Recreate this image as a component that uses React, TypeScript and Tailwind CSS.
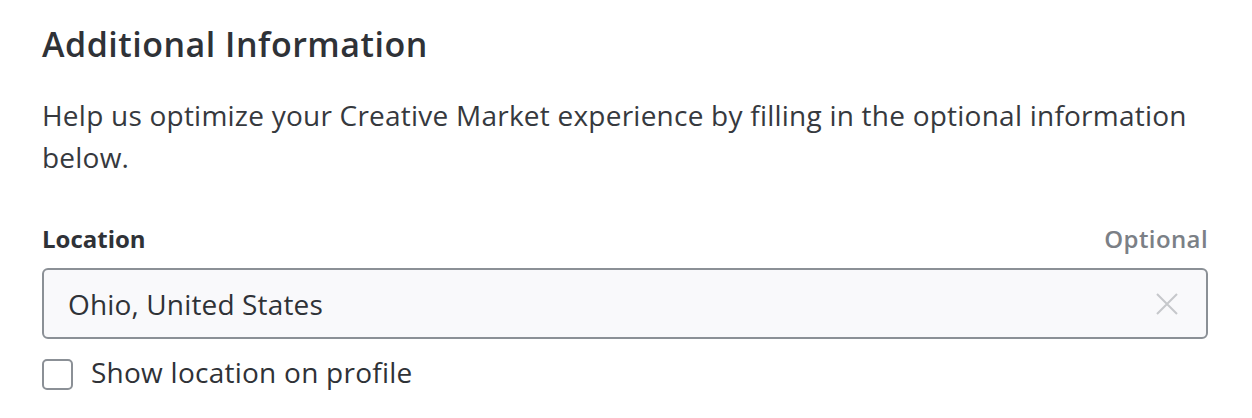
import React from "react";

export default function App() {
  return (
    <div
      className="w-[1252px] h-[418px] bg-white text-[#2f3237] pl-[42px] pr-[44px] pt-[22px]"
      style={{ fontFamily: "'Open Sans', 'Noto Sans', sans-serif" }}
    >
      <h2 className="text-[34px] leading-[44px] font-semibold tracking-[0.5px]">Additional Information</h2>
      <p className="mt-[28px] text-[28px] leading-[42px] tracking-[0.23px] text-[#36393e]">
        Help us optimize your Creative Market experience by filling in the optional information below.
      </p>
      <div className="mt-[46px] flex items-center justify-between">
        <span className="text-[24px] leading-[30px] font-bold">Location</span>
        <span className="text-[24px] leading-[30px] font-semibold tracking-[0.4px] text-[#7b8086]">Optional</span>
      </div>
      <div className="mt-[14px] h-[71px] flex items-center justify-between rounded-[6px] border-2 border-[#8b9096] bg-[#f9f9fb] pl-[24px] pr-[28px]">
        <span className="text-[28px] leading-[36px] tracking-[0.15px]">Ohio, United States</span>
        <svg width="22" height="22" viewBox="0 0 22 22" fill="none" stroke="#c6c8cb" strokeWidth="2">
          <path d="M1 1L21 21M21 1L1 21" />
        </svg>
      </div>
      <label className="mt-[18px] flex items-center gap-[18px]">
        <span className="w-[31px] h-[31px] rounded-[5px] border-2 border-[#8b9096] bg-white" />
        <span className="text-[28px] leading-[30px] tracking-[0.25px] pb-[5px]">Show location on profile</span>
      </label>
    </div>
  );
}
